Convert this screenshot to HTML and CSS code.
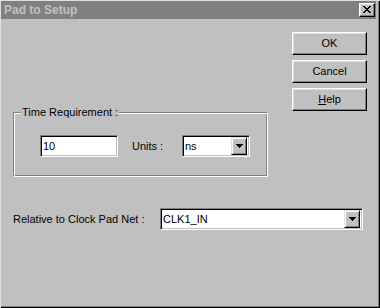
FILE: index.html
```html
<!DOCTYPE html>
<html>
<head>
<meta charset="utf-8">
<link rel="stylesheet" href="styles.css">
</head>
<body>
<div class="window">
  <div class="titlebar">
    <span class="title">Pad to Setup</span>
    <span class="close"><svg width="8" height="7" viewBox="0 0 8 7" shape-rendering="crispEdges"><path d="M0 0h2v1H0z M6 0h2v1H6z M1 1h2v1H1z M5 1h2v1H5z M2 2h4v1H2z M3 3h2v1H3z M2 4h4v1H2z M1 5h2v1H1z M5 5h2v1H5z M0 6h2v1H0z M6 6h2v1H6z" fill="#000"/></svg></span>
  </div>
  <div class="content">
    <div class="top">
      <fieldset class="group">
        <legend>Time Requirement :</legend>
        <div class="group-row">
          <div class="field edit">10</div>
          <span class="units">Units :</span>
          <div class="field combo small"><span class="value">ns</span><span class="drop"><svg width="7" height="4" viewBox="0 0 7 4" shape-rendering="crispEdges"><path d="M0 0h7v1H0z M1 1h5v1H1z M2 2h3v1H2z M3 3h1v1H3z" fill="#000"/></svg></span></div>
        </div>
      </fieldset>
      <div class="buttons">
        <div class="btn">OK</div>
        <div class="btn">Cancel</div>
        <div class="btn"><u>H</u>elp</div>
      </div>
    </div>
    <div class="rel-row">
      <span class="rel-label">Relative to Clock Pad Net :</span>
      <div class="field combo wide"><span class="value">CLK1_IN</span><span class="drop"><svg width="7" height="4" viewBox="0 0 7 4" shape-rendering="crispEdges"><path d="M0 0h7v1H0z M1 1h5v1H1z M2 2h3v1H2z M3 3h1v1H3z" fill="#000"/></svg></span></div>
    </div>
  </div>
</div>
</body>
</html>
```

FILE: styles.css
```css
html, body {
  margin: 0;
  padding: 0;
  background: #c0c0c0;
}
body {
  font-family: "Liberation Sans", Arial, sans-serif;
  font-size: 11px;
  color: #000;
}
.window {
  width: 380px;
  height: 308px;
  box-sizing: border-box;
  background: #c0c0c0;
  box-shadow: inset 1px 1px #dfdfdf, inset -1px -1px #000, inset -2px -2px #808080;
  padding: 1px 4px 0 1px;
  display: flex;
  flex-direction: column;
}
.titlebar {
  height: 18px;
  background: #808080;
  display: flex;
  align-items: center;
  justify-content: space-between;
  padding: 0 1px 0 3px;
}
.title {
  color: #c0c0c0;
  font-weight: bold;
  font-size: 12px;
  line-height: 18px;
}
.close {
  width: 16px;
  height: 14px;
  box-sizing: border-box;
  background: #c0c0c0;
  border: 1px solid;
  border-color: #fff #000 #000 #fff;
  box-shadow: inset -1px -1px #808080, inset 1px 1px #dfdfdf;
  display: flex;
  align-items: center;
  justify-content: center;
  padding: 0 1px 1px 0;
}
.close svg, .drop svg { display: block; }
.content {
  padding: 13px 9px 0 12px;
}
.top {
  display: flex;
  justify-content: space-between;
  align-items: flex-start;
}
.group {
  margin: 74px 0 0 0;
  width: 255px;
  box-sizing: border-box;
  border: 1px solid;
  border-color: #808080 #fff #fff #808080;
  box-shadow: inset 1px 1px #fff, inset -1px -1px #808080;
  padding: 16px 7px 19px 7px;
}
.group legend {
  padding: 0 1px;
  background: #c0c0c0;
  line-height: 13px;
}
.group-row {
  display: flex;
  align-items: center;
  padding-left: 19px;
}
.field {
  box-sizing: border-box;
  height: 22px;
  background: #fff;
  border: 1px solid;
  border-color: #808080 #fff #fff #808080;
  box-shadow: inset 1px 1px #000, inset -1px -1px #c0c0c0;
  display: flex;
  align-items: center;
  padding: 1px 2px 1px 2px;
}
.edit {
  width: 78px;
}
.units {
  margin-left: 14px;
  width: 50px;
}
.combo .value {
  flex: 1;
}
.small {
  width: 68px;
}
.drop {
  width: 16px;
  height: 18px;
  box-sizing: border-box;
  background: #c0c0c0;
  border: 1px solid;
  border-color: #dfdfdf #000 #000 #dfdfdf;
  box-shadow: inset 1px 1px #fff, inset -1px -1px #808080;
  display: flex;
  align-items: center;
  justify-content: center;
  padding-bottom: 1px;
}
.buttons {
  display: flex;
  flex-direction: column;
  gap: 5px;
}
.btn {
  width: 75px;
  height: 23px;
  box-sizing: border-box;
  border: 1px solid;
  border-color: #fff #000 #000 #fff;
  box-shadow: inset -1px -1px #808080, inset 1px 1px #dfdfdf;
  display: flex;
  align-items: center;
  justify-content: center;
  padding-bottom: 1px;
}
.rel-row {
  display: flex;
  align-items: center;
  margin-top: 31px;
}
.rel-label {
  width: 147px;
}
.wide {
  width: 203px;
}
```
